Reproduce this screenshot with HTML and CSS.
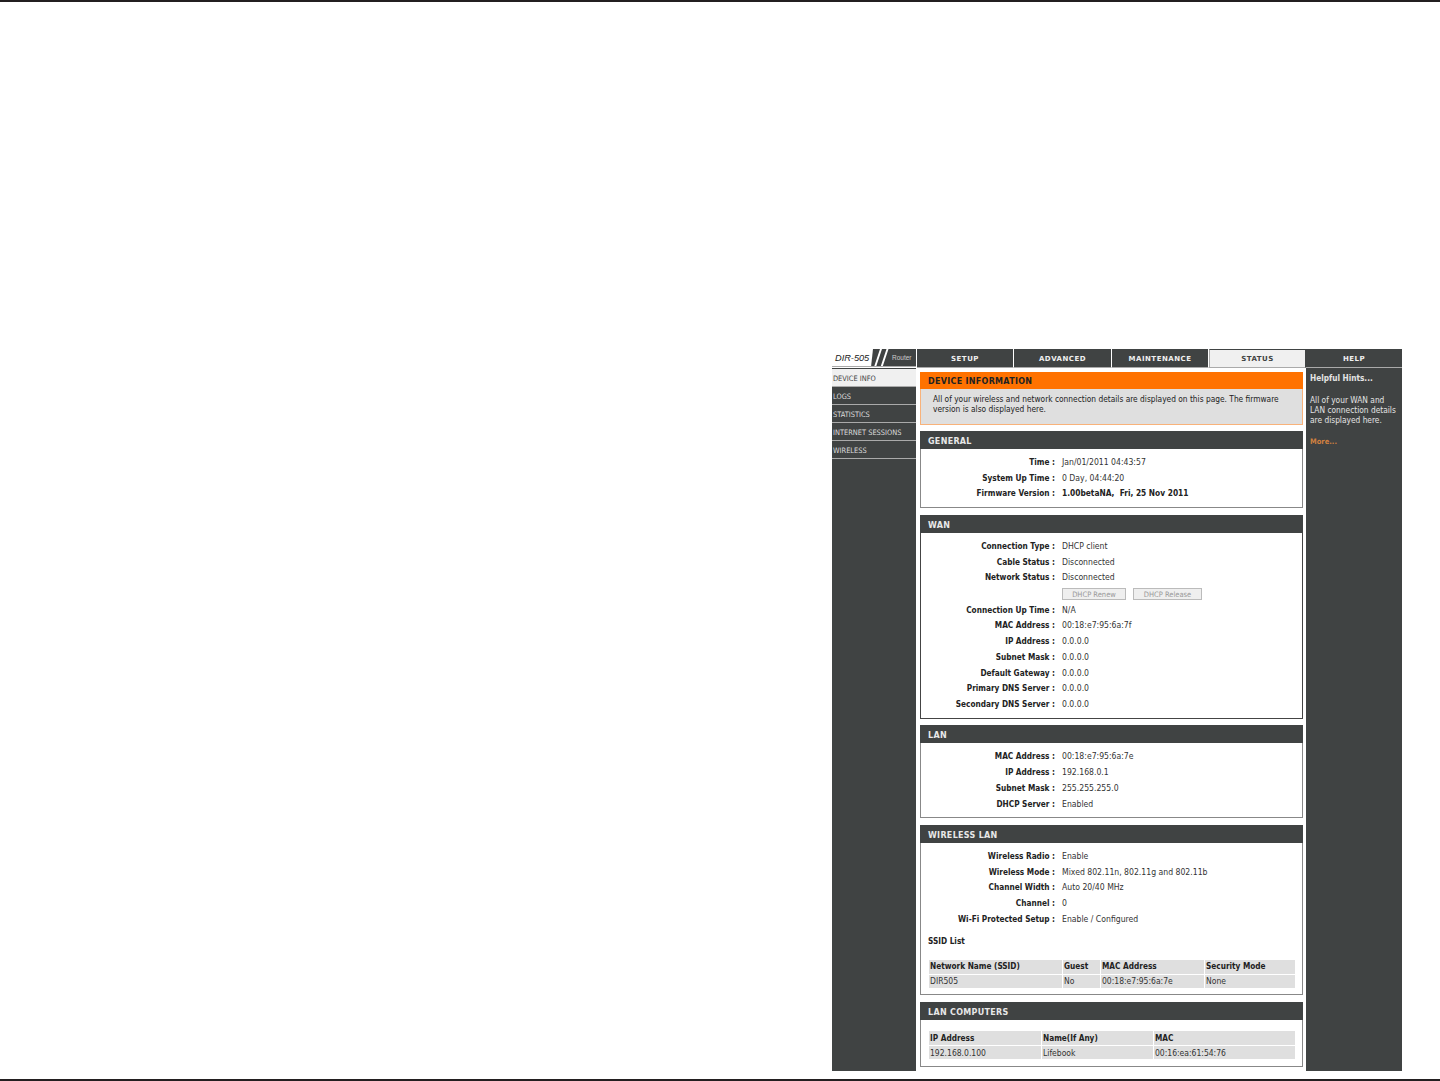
FILE: index.html
```html
<!DOCTYPE html>
<html lang="en">
<head>
<meta charset="utf-8">
<title>DIR-505 Status</title>
<link rel="stylesheet" href="styles.css">
</head>
<body>
<div class="page">
  <div class="app">
    <div class="logo">
      <span class="model">DIR-505</span>
      <svg class="slashes" width="20" height="18" viewBox="0 0 20 18"><path d="M0 18 L0 0 H3 L1 18 Z" fill="#fff"/><path d="M4 18 L10 0 H12 L6 18 Z M10.5 18 L16.5 0 H18.5 L12.5 18 Z" fill="#fff"/></svg>
      <span class="router">Router</span>
    </div>
    <div class="tabs">
      <div class="tab">SETUP</div>
      <div class="tab">ADVANCED</div>
      <div class="tab">MAINTENANCE</div>
      <div class="tab active">STATUS</div>
    </div>
    <div class="help-tab">HELP</div>

    <nav class="side">
      <div class="nav-item current">DEVICE INFO</div>
      <div class="nav-item">LOGS</div>
      <div class="nav-item">STATISTICS</div>
      <div class="nav-item">INTERNET SESSIONS</div>
      <div class="nav-item">WIRELESS</div>
    </nav>

    <main class="main">
      <section class="intro">
        <h1 class="intro-head">DEVICE INFORMATION</h1>
        <p class="intro-text">All of your wireless and network connection details are displayed on this page. The firmware version is also displayed here.</p>
      </section>

      <section class="box box-general">
        <h2 class="bar">GENERAL</h2>
        <div class="rows">
          <div class="row"><span class="k">Time :</span><span class="v">Jan/01/2011 04:43:57</span></div>
          <div class="row"><span class="k">System Up Time :</span><span class="v">0 Day, 04:44:20</span></div>
          <div class="row"><span class="k">Firmware Version :</span><span class="v strong">1.00betaNA,&nbsp; Fri, 25 Nov 2011</span></div>
        </div>
      </section>

      <section class="box box-wan">
        <h2 class="bar">WAN</h2>
        <div class="rows">
          <div class="row"><span class="k">Connection Type :</span><span class="v">DHCP client</span></div>
          <div class="row"><span class="k">Cable Status :</span><span class="v">Disconnected</span></div>
          <div class="row"><span class="k">Network Status :</span><span class="v">Disconnected</span></div>
          <div class="row row-btn"><span class="k"></span><span class="btns"><button class="btn btn-renew" disabled>DHCP Renew</button><button class="btn btn-release" disabled>DHCP Release</button></span></div>
          <div class="row"><span class="k">Connection Up Time :</span><span class="v">N/A</span></div>
          <div class="row"><span class="k">MAC Address :</span><span class="v">00:18:e7:95:6a:7f</span></div>
          <div class="row"><span class="k">IP Address :</span><span class="v">0.0.0.0</span></div>
          <div class="row"><span class="k">Subnet Mask :</span><span class="v">0.0.0.0</span></div>
          <div class="row"><span class="k">Default Gateway :</span><span class="v">0.0.0.0</span></div>
          <div class="row"><span class="k">Primary DNS Server :</span><span class="v">0.0.0.0</span></div>
          <div class="row"><span class="k">Secondary DNS Server :</span><span class="v">0.0.0.0</span></div>
        </div>
      </section>

      <section class="box box-lan">
        <h2 class="bar">LAN</h2>
        <div class="rows">
          <div class="row"><span class="k">MAC Address :</span><span class="v">00:18:e7:95:6a:7e</span></div>
          <div class="row"><span class="k">IP Address :</span><span class="v">192.168.0.1</span></div>
          <div class="row"><span class="k">Subnet Mask :</span><span class="v">255.255.255.0</span></div>
          <div class="row"><span class="k">DHCP Server :</span><span class="v">Enabled</span></div>
        </div>
      </section>

      <section class="box box-wlan">
        <h2 class="bar">WIRELESS LAN</h2>
        <div class="rows">
          <div class="row"><span class="k">Wireless Radio :</span><span class="v">Enable</span></div>
          <div class="row"><span class="k">Wireless Mode :</span><span class="v">Mixed 802.11n, 802.11g and 802.11b</span></div>
          <div class="row"><span class="k">Channel Width :</span><span class="v">Auto 20/40 MHz</span></div>
          <div class="row"><span class="k">Channel :</span><span class="v">0</span></div>
          <div class="row"><span class="k">Wi-Fi Protected Setup :</span><span class="v">Enable / Configured</span></div>
        </div>
        <h3 class="sub">SSID List</h3>
        <table class="grid">
          <colgroup><col class="c-ssid"><col class="c-guest"><col class="c-mac"><col></colgroup>
          <tr><th>Network Name (SSID)</th><th>Guest</th><th>MAC Address</th><th>Security Mode</th></tr>
          <tr><td>DIR505</td><td>No</td><td>00:18:e7:95:6a:7e</td><td>None</td></tr>
        </table>
      </section>

      <section class="box box-comp">
        <h2 class="bar">LAN COMPUTERS</h2>
        <table class="grid grid-comp">
          <colgroup><col class="c-ip"><col class="c-name"><col></colgroup>
          <tr><th>IP Address</th><th>Name(If Any)</th><th>MAC</th></tr>
          <tr><td>192.168.0.100</td><td>Lifebook</td><td>00:16:ea:61:54:76</td></tr>
        </table>
      </section>
    </main>

    <aside class="help">
      <div class="help-title">Helpful Hints...</div>
      <p class="help-text">All of your WAN and LAN connection details are displayed here.</p>
      <div class="help-more">More...</div>
    </aside>
  </div>
</div>
</body>
</html>
```
FILE: styles.css
```css
* { box-sizing: border-box; }
html, body { margin: 0; padding: 0; background: #fff; }
.page {
  width: 1440px;
  height: 1081px;
  overflow: hidden;
  border-top: 2px solid #231f20;
  border-bottom: 2px solid #231f20;
  padding: 347px 0 0 832px;
  font-family: "DejaVu Sans Condensed", "DejaVu Sans", sans-serif;
  font-size: 8.6px;
  color: #222;
}
.app {
  width: 570px;
  height: 722px;
  display: grid;
  grid-template-columns: 85px 389px 96px;
  grid-template-rows: 19px 703px;
}
.logo {
  display: flex;
  align-items: center;
  height: 18px;
  width: 84px;
  background: #404343;
  border-bottom: 1px solid #aaa;
  overflow: hidden;
}
.model {
  flex: none;
  height: 18px;
  width: 38px;
  padding-left: 3px;
  background: #fff;
  font: italic 9.2px/18px "Liberation Sans", sans-serif;
  color: #222;
  white-space: nowrap;
}
.slashes { flex: none; }
.router { flex: none; font: 6.5px "Liberation Sans", sans-serif; color: #ccc; margin-left: 2px; }
.tabs {
  display: grid;
  grid-template-columns: 97px 98px 97px 97px;
  height: 19px;
}
.tab, .help-tab {
  display: flex;
  align-items: center;
  justify-content: center;
  height: 19px;
  padding-top: 1px;
  background: #404343;
  color: #f0f0f0;
  font-family: "DejaVu Sans", sans-serif;
  font-weight: bold;
  font-size: 7px;
  letter-spacing: 0.5px;
  border-right: 1px solid #fff;
  border-bottom: 1px solid #aaa;
}
.tab.active {
  background: #f0f0f0;
  color: #404343;
  border: 1px solid #aaa;
  border-top: 1px solid #404343;
  border-right: 1px solid #404343;
}
.help-tab { border-right: 0; }
.side {
  background: #404343;
  margin-right: 1px;
  padding-top: 1px;
}
.nav-item {
  height: 18px;
  padding: 2.5px 0 0 1px;
  color: #ddd;
  border-bottom: 1px solid #aaa;
  line-height: 13px;
  font-size: 7.4px;
}
.nav-item.current { background: #f0f0f0; color: #404343; }
.main {
  display: flex;
  flex-direction: column;
  padding: 4px 3px 0;
  background: #fff;
}
.intro {
  height: 53px;
  background: #dfdfdf;
  border: 1px solid #f8b27a;
  border-top: 0;
  margin-bottom: 6px;
  flex: none;
}
.intro-head, .bar {
  margin: 0;
  font-family: "DejaVu Sans", sans-serif;
  font-size: 8px;
  font-weight: bold;
  letter-spacing: 0.3px;
  padding-left: 8px;
}
.intro-head { background: #ff7200; color: #222; margin: 0 -1px; height: 17px; line-height: 20px; }
.bar { background: #404343; color: #e8e8e8; margin: -1px -1px 0; height: 18px; line-height: 21px; }
.intro-text {
  margin: 0;
  padding: 5px 20px 0 12px;
  line-height: 10px;
  color: #222;
  font-size: 8.3px;
}
.box {
  border: 1px solid #888;
  margin-bottom: 7px;
  flex: none;
}
.box-general { height: 77px; }
.box-wan { height: 204px; margin-bottom: 6px; border-color: #444; }
.box-lan { height: 93px; }
.box-wlan { height: 170px; }
.box-comp { height: 65px; margin-bottom: 0; }
.rows { padding-top: 5px; }
.box-lan .rows { padding-top: 5.5px; }
.row {
  display: flex;
  align-items: center;
  height: 15.75px;
}
.row-btn { height: 16.5px; padding-top: 1px; }
.k {
  flex: none;
  width: 134px;
  text-align: right;
  font-size: 8.2px;
  font-weight: bold;
  white-space: nowrap;
  color: #222;
}
.v, .btns { margin-left: 7px; white-space: nowrap; color: #333; }
.v.strong { font-size: 8.3px; font-weight: bold; color: #222; }
.btns { display: flex; gap: 7px; }
.btn {
  height: 12px;
  padding: 0;
  font: 7.5px "DejaVu Sans Condensed", "DejaVu Sans", sans-serif;
  color: #999;
  background: #efefef;
  border: 1px solid #bbb;
  border-radius: 0;
}
.btn-renew { width: 64px; }
.btn-release { width: 69px; }
.sub {
  margin: 9px 0 0 7px;
  font-size: 8.2px;
  font-weight: bold;
  line-height: 11px;
  color: #222;
}
.grid {
  table-layout: fixed;
  width: 368px;
  margin: 12px 0 0 7px;
  border-collapse: separate;
  border-spacing: 1px;
  font-size: 8.5px;
}
.grid-comp { margin-top: 10px; }
.grid th, .grid td {
  background: #dfdfdf;
  padding: 0 0 0 1px;
  text-align: left;
  height: 13px;
  line-height: 11px;
  overflow: hidden;
  white-space: nowrap;
}
.grid th { font-size: 8.2px; font-weight: bold; height: 14px; color: #222; }
.grid td { color: #333; padding-top: 1px; }
.c-ssid { width: 133px; }
.c-guest { width: 37px; }
.c-mac { width: 103px; }
.c-ip { width: 112px; }
.c-name { width: 111px; }
.help {
  background: #404343;
  color: #e4e4e4;
  padding: 5px 4px 0;
  font-size: 8.3px;
}
.help-title { font-size: 8.2px; font-weight: bold; line-height: 11px; }
.help-text { margin: 11px 0 0; line-height: 10px; }
.help-more { margin-top: 11px; font-size: 7.5px; font-weight: bold; color: #d08040; line-height: 11px; }
```
